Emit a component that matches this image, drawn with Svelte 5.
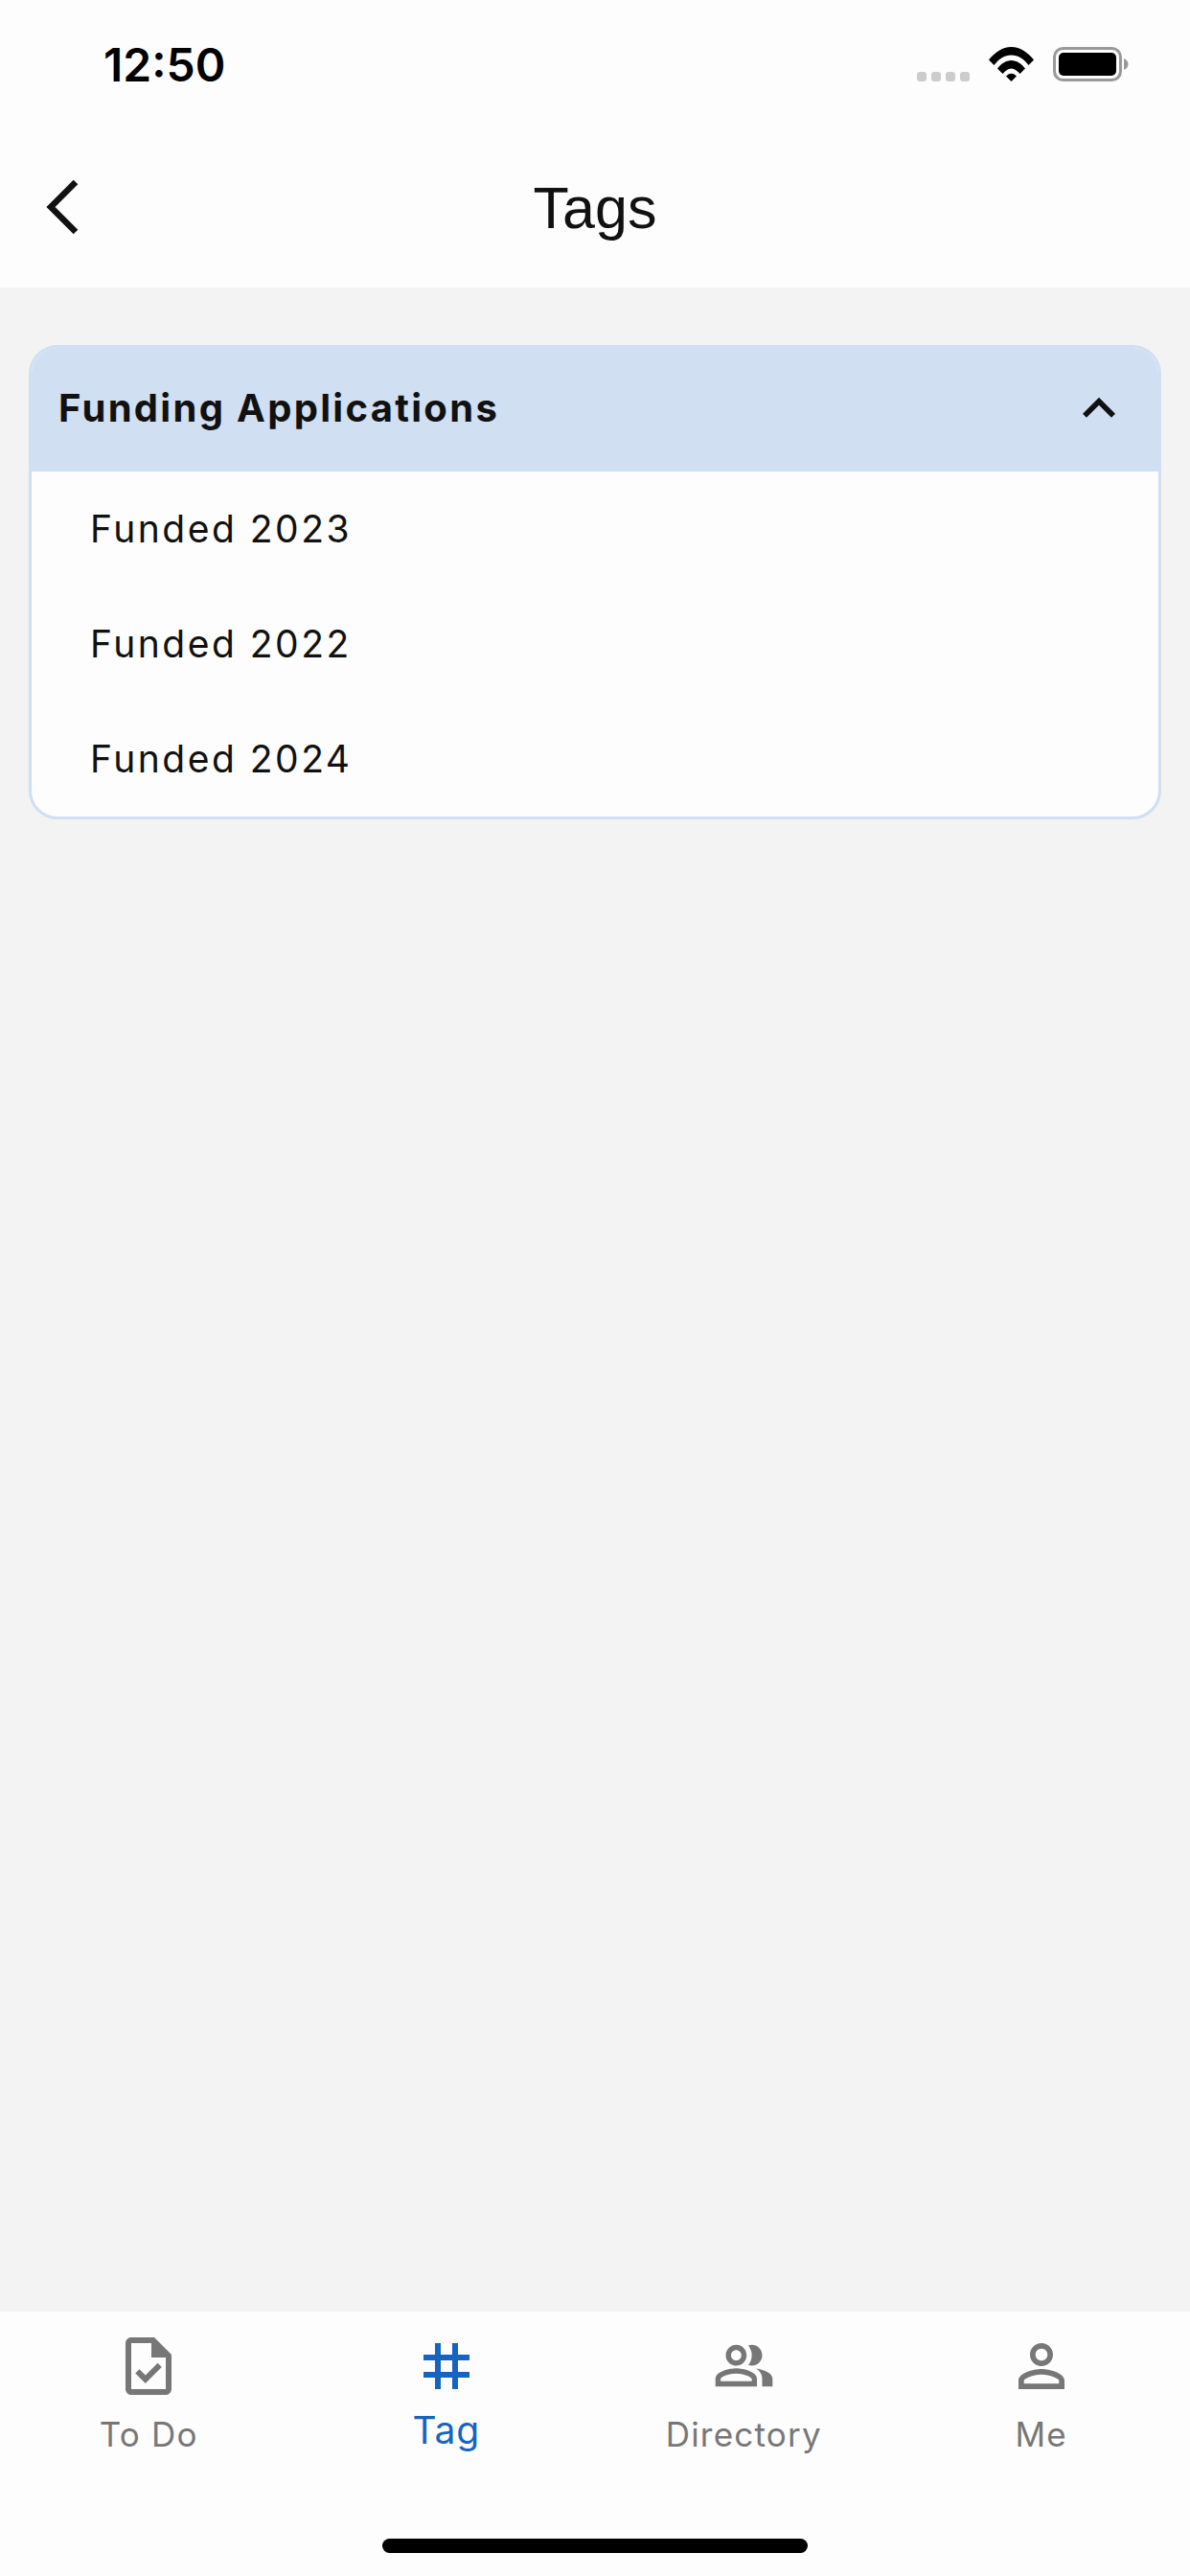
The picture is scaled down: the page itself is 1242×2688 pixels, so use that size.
<script>
	const tags = ['Funded 2023', 'Funded 2022', 'Funded 2024'];
</script>

<div class="page">
	<header class="top">
		<div class="status">
			<span class="time">12:50</span>
			<div class="status-icons">
				<div class="signal"><i></i><i></i><i></i><i></i></div>
				<svg class="wifi" viewBox="0 0 47 36">
					<path d="M0 13.5C6 6 14 0 23.5 0S41 6 47 13.5L41.5 19C36.5 12.5 30.5 8.5 23.5 8.5S10.500 12.500 5.500 19Z" />
					<path d="M9 22.500C13 17.500 18 14 23.500 14S34 17.500 38 22.500L32.500 28C30 25 27 22.500 23.500 22.500S17 25 14.500 28Z" />
					<path d="M18 30.500C19.500 29 21.500 27.800 23.500 27.800S27.500 29 29 30.500L23.500 36Z" />
				</svg>
				<svg class="battery" viewBox="0 0 79 36">
					<rect x="1.500" y="1.500" width="69" height="33" rx="9" fill="none" stroke="#999" stroke-width="3" />
					<rect x="6" y="6" width="60" height="24" rx="5" fill="#000" />
					<path d="M74 12c2.500 1 4.500 3 4.500 6s-2 5-4.500 6Z" fill="#999" />
				</svg>
			</div>
		</div>
		<div class="nav">
			<svg class="back" viewBox="0 0 40 64">
				<path d="M33 6 7 32l26 26" fill="none" stroke="#111" stroke-width="6.500" />
			</svg>
			<h1>Tags</h1>
		</div>
	</header>

	<main>
		<section class="card">
			<div class="card-head">
				<span>Funding Applications</span>
				<svg class="toggle" viewBox="0 0 24 24">
					<path d="M12 8l-6 6 1.410 1.410L12 10.830l4.590 4.580L18 14z" />
				</svg>
			</div>
			{#each tags as tag}
				<div class="row">{tag}</div>
			{/each}
		</section>
	</main>

	<nav class="tabs">
		<div class="tab">
			<svg viewBox="0 0 24 24">
				<path d="M14 2H6c-1.100 0-1.990.9-1.990 2L4 20c0 1.100.89 2 1.990 2H18c1.100 0 2-.9 2-2V8l-6-6zm4 18H6V4h7v5h5v11zm-9.180-6.950L7.400 14.460 10.940 18l5.660-5.660-1.410-1.410-4.240 4.240-2.130-2.120z" />
			</svg>
			<span>To Do</span>
		</div>
		<div class="tab active">
			<svg viewBox="0 0 24 24">
				<path d="M20 10V8h-4V4h-2v4h-4V4H8v4H4v2h4v4H4v2h4v4h2v-4h4v4h2v-4h4v-2h-4v-4h4zm-6 4h-4v-4h4v4z" />
			</svg>
			<span>Tag</span>
		</div>
		<div class="tab">
			<svg class="people" viewBox="0 0 24 24">
				<path d="M16.670 13.130C18.040 14.060 19 15.320 19 17v3h4v-3c0-2.180-3.570-3.470-6.330-3.870z" />
				<path d="M15 12c2.210 0 4-1.790 4-4s-1.790-4-4-4c-.47 0-.91.1-1.330.24C14.500 5.270 15 6.580 15 8s-.5 2.730-1.330 3.760c.42.14.86.24 1.330.24z" />
				<path d="M9 12c2.210 0 4-1.790 4-4s-1.790-4-4-4-4 1.790-4 4 1.790 4 4 4zm0-6c1.100 0 2 .9 2 2s-.9 2-2 2-2-.9-2-2 .9-2 2-2z" />
				<path d="M9 13c-2.670 0-8 1.340-8 4v3h16v-3c0-2.660-5.330-4-8-4zm6 5H3v-.99C3.200 16.290 6.300 15 9 15s5.800 1.290 6 2v1z" />
			</svg>
			<span>Directory</span>
		</div>
		<div class="tab">
			<svg viewBox="0 0 24 24">
				<path d="M12 5.900c1.160 0 2.100.94 2.100 2.100s-.94 2.100-2.100 2.100S9.900 9.160 9.900 8s.94-2.100 2.100-2.100m0 9c2.970 0 6.100 1.460 6.100 2.100v1.100H5.900V17c0-.64 3.130-2.100 6.100-2.100M12 4C9.790 4 8 5.790 8 8s1.790 4 4 4 4-1.790 4-4-1.790-4-4-4zm0 9c-2.670 0-8 1.340-8 4v3h16v-3c0-2.660-5.330-4-8-4z" />
			</svg>
			<span>Me</span>
		</div>
		<div class="home"></div>
	</nav>
</div>

<style>
	:global(body) {
		margin: 0;
	}

	.page {
		display: flex;
		flex-direction: column;
		height: 2688px;
		background: #f3f3f3;
		font-family: Inter, Roboto, sans-serif;
		color: #111;
	}

	.top {
		background: #fdfdfd;
		height: 300px;
	}

	.status {
		display: flex;
		justify-content: space-between;
		align-items: flex-start;
		height: 132px;
		padding: 39px 64px 0 108px;
		box-sizing: border-box;
	}

	.time {
		font-size: 48px;
		font-weight: 600;
		line-height: 58px;
		color: #000;
	}

	.status-icons {
		display: flex;
		align-items: flex-end;
		margin-top: 10px;
	}

	.signal {
		display: flex;
		gap: 5px;
		margin-right: 20px;
	}

	.signal i {
		width: 10px;
		height: 10px;
		border-radius: 3px;
		background: #ccc;
	}

	.wifi {
		width: 47px;
		height: 36px;
		margin-right: 20px;
	}

	.battery {
		width: 79px;
		height: 36px;
	}

	.nav {
		position: relative;
		display: flex;
		justify-content: center;
		align-items: center;
		height: 168px;
	}

	.back {
		position: absolute;
		left: 46px;
		top: 52px;
		width: 40px;
		height: 64px;
	}

	h1 {
		margin: 3px 0 0;
		font-family: "Liberation Sans", Arial, sans-serif;
		font-size: 61px;
		font-weight: 400;
		line-height: 1;
	}

	main {
		flex: 1;
		padding: 60px 30px 0;
	}

	.card {
		border: 3px solid #d0dff2;
		border-radius: 30px;
		background: #fdfdfd;
		overflow: hidden;
	}

	.card-head {
		display: flex;
		justify-content: space-between;
		align-items: center;
		height: 129px;
		margin: -3px -3px 0;
		padding: 1px 31px 2px 31px;
		background: #d0dff2;
		font-size: 40px;
		font-weight: 700;
		letter-spacing: 2.300px;
	}

	.toggle {
		width: 68px;
		height: 68px;
		fill: #111;
	}

	.row {
		display: flex;
		align-items: center;
		height: 120px;
		padding: 0 0 2px 61px;
		box-sizing: border-box;
		font-size: 39px;
		letter-spacing: 2.500px;
	}

	.tabs {
		position: relative;
		display: grid;
		grid-template-columns: repeat(4, 1fr);
		align-items: start;
		height: 276px;
		padding: 21px 0 0;
		box-sizing: border-box;
		background: #fdfdfd;
	}

	.tab {
		display: flex;
		flex-direction: column;
		align-items: center;
		color: #777;
		font-size: 35px;
		letter-spacing: 1.200px;
		line-height: 42px;
	}

	.tab svg {
		width: 72px;
		height: 72px;
		fill: currentColor;
	}

	.tab .people {
		width: 65px;
		height: 65px;
		margin: 3px 0 4px;
	}

	.tab span {
		margin-top: 14px;
	}

	.tab.active {
		color: #1565c0;
		font-size: 39px;
		letter-spacing: 0.800px;
	}

	.tab.active span {
		margin-top: 10px;
	}

	.home {
		position: absolute;
		left: 399px;
		bottom: 24px;
		width: 444px;
		height: 15px;
		border-radius: 8px;
		background: #000;
	}
</style>
